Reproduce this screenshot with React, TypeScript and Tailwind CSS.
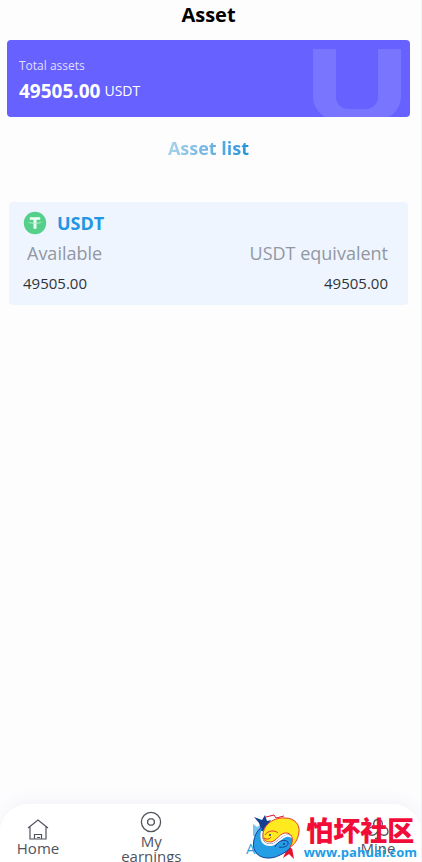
import c from "clsx"
import { ReactNode } from "react"

type TabProps = {
  label: string
  href: string
  icon: ReactNode
  active?: boolean
}

const HomeIcon = () => (
  <svg className="h-6 w-6 shrink-0" viewBox="0 0 24 24" fill="none" stroke="currentColor" strokeWidth="1.200">
    <path d="M2 11 12 3l10 8M4 9.500V22h16V9.500M8.500 22v-4.500h7V22M11 20.500h3" />
  </svg>
)

const EarningsIcon = () => (
  <svg className="h-6 w-6 shrink-0" viewBox="0 0 24 24" fill="none" stroke="currentColor" strokeWidth="1.300">
    <circle cx="12" cy="12" r="9.600" />
    <path d="M10.500 8.800h3l1.800 1.800v2.800l-1.800 1.800h-3l-1.800-1.800v-2.800z" />
  </svg>
)

const AssetsIcon = () => (
  <svg className="h-6 w-6 shrink-0" viewBox="0 0 24 24">
    <path d="M0 7l4 3 5-3 2 3v9H0z" fill="#79c3ee" />
    <path d="M9 4l6 3 6-4v5l-8 3z" fill="#3fa5e4" />
  </svg>
)

// three leaves on a short stem
const MineIcon = () => (
  <svg className="h-6 w-6 shrink-0" viewBox="0 0 24 24" fill="none" stroke="currentColor" strokeWidth="1.300">
    <path d="M9.500 10.500C6 7 8 2.500 12 2.500s6 4.500 2.500 8c4-1.500 7.500.5 7.500 4 0 4-5 5-8 2l-2-2-2 2c-3 3-8 2-8-2 0-3.500 3.500-5.500 7.500-4zM12 15v6M9 21.500h6" />
  </svg>
)

// USDT coin
const TetherIcon = () => (
  <svg className="h-6 w-6 shrink-0" viewBox="0 0 24 24">
    <circle cx="12" cy="12" r="11.200" fill="#55d08a" />
    <path d="M6.800 6.200h10.400v2.600h-3.700v9h-3v-9H6.800z" fill="#f2fff8" />
    <path d="M5.500 11c2 1.800 11 1.800 13 0" fill="none" stroke="#b5efcd" strokeWidth="1" />
  </svg>
)

const FishLogo = () => (
  <svg className="h-12 w-[50px] shrink-0" viewBox="0 0 50 48">
    {/* tails */}
    <path d="M4 3l8 3 3-5 2 6 4-1-9 12-3-9z" fill="#16408f" />
    <path d="M16 3l8-2 2 3 8-2" fill="none" stroke="#e5122d" strokeWidth="1" />
    <path d="M34 36l5-6 4-3-1 7 2 11-5-5-6 4 3-7z" fill="#e5122d" />
    {/* blue fish */}
    <path
      d="M13 12C5 17 1 30 5 37c4 8 16 9 25 4 9-4 15-11 13-17-2-5-9-3-13 1-4 3-7 6-12 5-7-2-8-10-5-18z"
      fill="#269ee5"
      stroke="#143d96"
      strokeWidth="1"
    />
    <path d="M12 17c-2 9 1 14 8 14 9 0 12-11 19-9 7 1 6 9 2 12" fill="none" stroke="#fff" strokeWidth="2" />
    {/* yellow fish */}
    <path
      d="M13 23C12 10 25 3 35 4c10 0 15 7 14 14-1 8-5 13-9 15 4-6 3-13-3-14-7-1-10 8-16 9-5 0-8-2-8-5z"
      fill="#ffe91f"
      stroke="#e53a2d"
      strokeWidth="1"
    />
    <path d="M15 21c3-5 10-5 13-2M14 24c3 2 6 1 7-1" fill="none" stroke="#e53a2d" strokeWidth="1" />
    <path d="M25 33c3-7 10-8 13-5 1 4-4 6-9 5" fill="none" stroke="#143d96" strokeWidth="1" />
    <circle cx="20" cy="21" r="1" fill="#143d96" />
    <circle cx="34" cy="30" r="1" fill="#143d96" />
  </svg>
)

const Tab: React.FC<TabProps> = props => {
  const { label, href, icon, active } = props
  return (
    <a
      href={href}
      className={c(
        "flex w-16 flex-col items-center justify-center text-center text-[15px] leading-[15px]",
        active ? "text-[#2f9fe3]" : "text-[#50545c]"
      )}>
      {icon}
      <span>{label}</span>
    </a>
  )
}

const App = () => {
  return (
    <div className="flex h-screen flex-col overflow-hidden border-r border-[#f1f2f6] bg-[#fdfdfe] font-['Open_Sans','Noto_Sans_CJK_SC',sans-serif]">
      <header className="flex h-10 shrink-0 items-start justify-center">
        <h1 className="pr-1 text-xl leading-[30px] font-bold text-black">Asset</h1>
      </header>

      <main className="flex-1 pr-[11px] pl-[7px]">
        <section className="relative h-[77px] overflow-hidden rounded bg-[#6661ff] px-3 pt-[17px] text-white">
          <p className="text-xs leading-[18px] text-[#e0dfff]">Total assets</p>
          <p className="flex items-center gap-1 leading-8">
            <strong className="text-[19px] leading-8 font-bold">49505.00</strong>
            <span className="text-sm leading-[30px]">USDT</span>
          </p>
          <svg className="absolute right-2 bottom-0 h-[68px] w-[90px]" viewBox="0 0 90 68">
            <path d="M1 0h23v48c0 6 5 12 12 12h18c7 0 12-6 12-12V0h23v48c0 8-5 16-12 20H13C6 64 1 56 1 48z" fill="#7975ff" />
          </svg>
        </section>

        <h2 className="mt-[15px] text-center text-lg leading-8 font-bold">
          <span className="bg-linear-to-r from-[#a9d3e9] to-[#1d94dd] bg-clip-text text-transparent">Asset list</span>
        </h2>

        <section className="mx-0.5 mt-[38px] h-[103px] rounded bg-[#eef5fe] pt-[7px] pr-5 pl-[14px]">
          <div className="flex h-7 items-center gap-2.5">
            <TetherIcon />
            <h3 className="text-lg font-bold text-[#2196e3]">USDT</h3>
          </div>
          <dl className="flex justify-between">
            <div>
              <dt className="pl-1 text-lg leading-8 text-[#9297a2]">Available</dt>
              <dd className="text-[15px] leading-7 text-[#30343b]">49505.00</dd>
            </div>
            <div className="text-right">
              <dt className="text-lg leading-8 text-[#9297a2]">USDT equivalent</dt>
              <dd className="text-[15px] leading-7 text-[#30343b]">49505.00</dd>
            </div>
          </dl>
        </section>
      </main>

      <nav className="relative flex h-[58px] shrink-0 justify-between rounded-t-[28px] bg-white pt-[7px] pr-[11px] pl-[6px] shadow-[0_-4px_16px_#f4f2f8]">
        <Tab label="Home" href="#home" icon={<HomeIcon />} />
        <Tab label="My earnings" href="#earnings" icon={<EarningsIcon />} />
        <Tab label="Asset" href="#asset" icon={<AssetsIcon />} active />
        <Tab label="Mine" href="#mine" icon={<MineIcon />} />

        {/* community badge over the tabs */}
        <div className="pointer-events-none absolute right-1 bottom-0 flex items-center gap-1">
          <FishLogo />
          <div className="flex flex-col items-center">
            <span className="text-[27px] leading-7 font-black text-[#f20d38]">怕坏社区</span>
            <span className="text-[13px] leading-[14px] font-bold text-[#1d9de5]">www.pahuai.com</span>
          </div>
        </div>
      </nav>
    </div>
  )
}

export default App
